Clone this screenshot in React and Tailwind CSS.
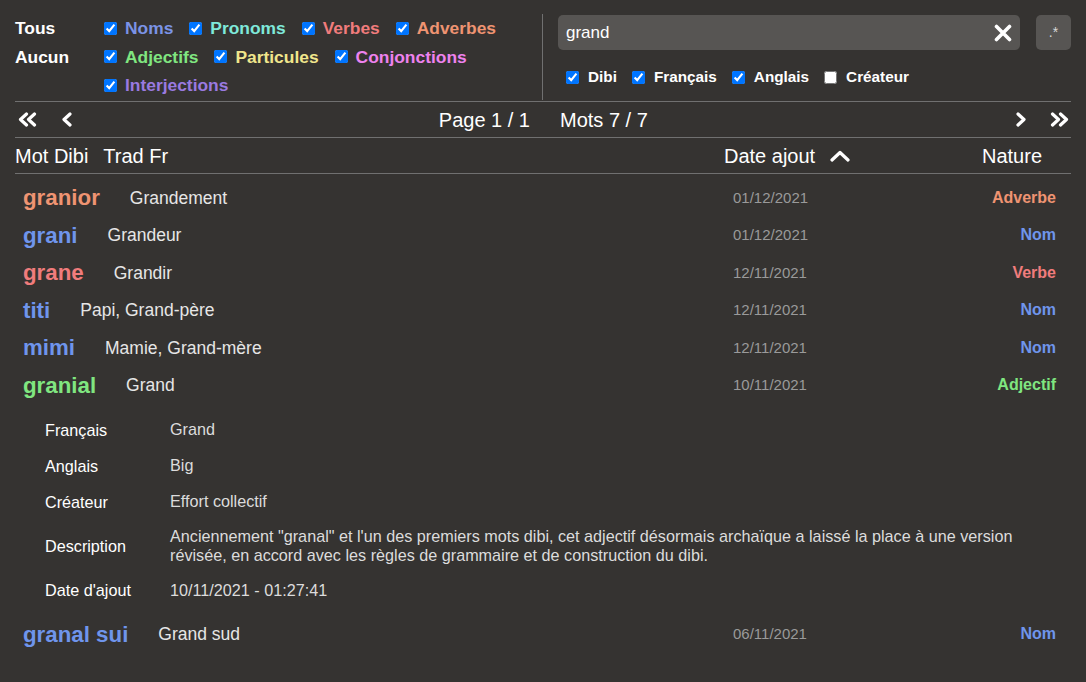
import React, { useState } from "react";

const FONT = { fontFamily: '"Liberation Sans", Arial, sans-serif' };

const NATURE_COLORS = {
  Nom: "text-[#6f95ec]",
  Verbe: "text-[#f07c7c]",
  Adverbe: "text-[#ef9472]",
  Adjectif: "text-[#80e680]",
};

const CATEGORIES = [
  [
    { label: "Noms", color: "text-[#7b93e6]" },
    { label: "Pronoms", color: "text-[#7fe9da]" },
    { label: "Verbes", color: "text-[#f07c7c]" },
    { label: "Adverbes", color: "text-[#ef9472]" },
  ],
  [
    { label: "Adjectifs", color: "text-[#80e680]" },
    { label: "Particules", color: "text-[#f0e68c]" },
    { label: "Conjonctions", color: "text-[#ee82ee]" },
  ],
  [{ label: "Interjections", color: "text-[#9a7ae0]" }],
];

const WORDS = [
  { dibi: "granior", fr: "Grandement", date: "01/12/2021", nature: "Adverbe" },
  { dibi: "grani", fr: "Grandeur", date: "01/12/2021", nature: "Nom" },
  { dibi: "grane", fr: "Grandir", date: "12/11/2021", nature: "Verbe" },
  { dibi: "titi", fr: "Papi, Grand-père", date: "12/11/2021", nature: "Nom" },
  { dibi: "mimi", fr: "Mamie, Grand-mère", date: "12/11/2021", nature: "Nom" },
  {
    dibi: "granial",
    fr: "Grand",
    date: "10/11/2021",
    nature: "Adjectif",
    details: [
      ["Français", "Grand"],
      ["Anglais", "Big"],
      ["Créateur", "Effort collectif"],
      [
        "Description",
        "Anciennement \"granal\" et l'un des premiers mots dibi, cet adjectif désormais archaïque a laissé la place à une version révisée, en accord avec les règles de grammaire et de construction du dibi.",
      ],
      ["Date d'ajout", "10/11/2021 - 01:27:41"],
    ],
  },
  { dibi: "granal sui", fr: "Grand sud", date: "06/11/2021", nature: "Nom" },
];

function Chevron({ dir = "left", double = false }) {
  const single = dir === "left" ? "M9 2 L3 7.5 L9 13" : "M3 2 L9 7.5 L3 13";
  const w = double ? 20 : 12;
  return (
    <svg width={w} height="15" viewBox={`0 0 ${w} 15`} fill="none" stroke="white" strokeWidth="3.2" strokeLinecap="round" strokeLinejoin="round">
      {double ? (
        <>
          <path d={single} transform="translate(0.5 0)" />
          <path d={single} transform="translate(8.5 0)" />
        </>
      ) : (
        <path d={single} />
      )}
    </svg>
  );
}

function ChevronUp() {
  return (
    <svg width="20" height="12" viewBox="0 0 20 12" fill="none" stroke="white" strokeWidth="3.2" strokeLinecap="round" strokeLinejoin="round">
      <path d="M2 10 L10 2.5 L18 10" />
    </svg>
  );
}

function CloseIcon() {
  return (
    <svg width="18" height="18" viewBox="0 0 18 18" fill="none" stroke="white" strokeWidth="3.6" strokeLinecap="round">
      <path d="M2.5 2.5 L15.5 15.5 M15.5 2.5 L2.5 15.5" />
    </svg>
  );
}

function Check({ checked, onChange }) {
  return <input type="checkbox" checked={checked} onChange={onChange} className="w-[13px] h-[13px] shrink-0" />;
}

export default function App() {
  const [cats, setCats] = useState({});
  const [sources, setSources] = useState({ Dibi: true, Français: true, Anglais: true, Créateur: false });
  const [search, setSearch] = useState("grand");

  return (
    <div className="min-h-screen bg-[#353331] text-white px-[15px] pt-[14px]" style={FONT}>
      {/* filtres */}
      <div className="flex h-[88px] border-b border-[#707070]">
        <div className="w-[527px] flex">
          <div className="w-[89px] text-[17.4px] font-bold">
            <div className="h-[28.5px] flex items-center">Tous</div>
            <div className="h-[28.5px] flex items-center">Aucun</div>
          </div>
          <div>
            {CATEGORIES.map((row, i) => (
              <div key={i} className="h-[28.5px] flex items-center">
                {row.map((c) => (
                  <label key={c.label} className="flex items-center mr-[16px]">
                    <Check
                      checked={cats[c.label] !== false}
                      onChange={() => setCats({ ...cats, [c.label]: cats[c.label] === false })}
                    />
                    <span className={`ml-[8px] text-[17.4px] font-bold ${c.color}`}>{c.label}</span>
                  </label>
                ))}
              </div>
            ))}
          </div>
        </div>
        <div className="w-px bg-[#707070] mb-px"></div>
        <div className="flex-1 pl-[15px] pt-[1px]">
          <div className="flex">
            <div className="flex-1 h-[35px] bg-[#575553] rounded-[5px] flex items-center pl-[8px] pr-[8px]">
              <input
                value={search}
                onChange={(e) => setSearch(e.target.value)}
                className="flex-1 bg-transparent outline-none text-[17px] text-white"
                style={FONT}
              />
              <CloseIcon />
            </div>
            <div className="w-[35px] h-[35px] ml-[16px] rounded-[5px] bg-[#575553] flex items-center justify-center text-[14px] text-[#d8d8d8]">
              .*
            </div>
          </div>
          <div className="flex items-center mt-[17px] h-[20px] pl-[8px] text-[15.3px] font-bold">
            {Object.keys(sources).map((s) => (
              <label key={s} className="flex items-center mr-[15px]">
                <Check checked={sources[s]} onChange={() => setSources({ ...sources, [s]: !sources[s] })} />
                <span className="ml-[9px]">{s}</span>
              </label>
            ))}
          </div>
        </div>
      </div>

      {/* pagination */}
      <div className="flex items-center h-[36px] border-b border-[#707070] text-[20px]">
        <div className="flex-1 flex items-center">
          <span className="ml-[2px]"><Chevron dir="left" double /></span>
          <span className="ml-[24px]"><Chevron dir="left" /></span>
          <span className="ml-auto mr-[13px]">Page 1 / 1</span>
        </div>
        <div className="flex-1 flex items-center">
          <span className="ml-[17px]">Mots 7 / 7</span>
          <span className="ml-auto"><Chevron dir="right" /></span>
          <span className="ml-[22px] mr-[2px]"><Chevron dir="right" double /></span>
        </div>
      </div>

      {/* entête */}
      <div className="flex items-center h-[36px] border-b border-[#707070] text-[20px]">
        <div className="flex-1 flex gap-[15px]">
          <span>Mot Dibi</span>
          <span>Trad Fr</span>
        </div>
        <div className="w-[258px] flex items-center">
          <span>Date ajout</span>
          <span className="ml-[15px]"><ChevronUp /></span>
        </div>
        <span className="mr-[29px]">Nature</span>
      </div>

      {/* mots */}
      <div className="pt-[5px]">
        {WORDS.map((w) => (
          <div key={w.dibi}>
            <div className="flex items-center h-[37.5px] pl-[8px] pr-[15px]">
              <div className="flex-1 flex items-center gap-[30px]">
                <span className={`text-[22.3px] font-bold ${NATURE_COLORS[w.nature]}`}>{w.dibi}</span>
                <span className="text-[17.5px] text-[#e6e6e6]">{w.fr}</span>
              </div>
              <span className="w-[173px] text-[15px] text-[#9a9a9a]">{w.date}</span>
              <span className={`w-[150px] text-right text-[16px] font-bold ${NATURE_COLORS[w.nature]}`}>{w.nature}</span>
            </div>
            {w.details && (
              <div className="pt-[8px] pb-[7px] pl-[30px] pr-[14px] text-[16.2px]">
                {w.details.map(([k, v]) => (
                  <div key={k} className={`flex items-center ${k === "Description" ? "py-[7px]" : "h-[36px]"}`}>
                    <span className="w-[125px] shrink-0">{k}</span>
                    <span className="flex-1 text-[#dcdcdc] leading-[19.3px]">{v}</span>
                  </div>
                ))}
              </div>
            )}
          </div>
        ))}
      </div>
    </div>
  );
}
